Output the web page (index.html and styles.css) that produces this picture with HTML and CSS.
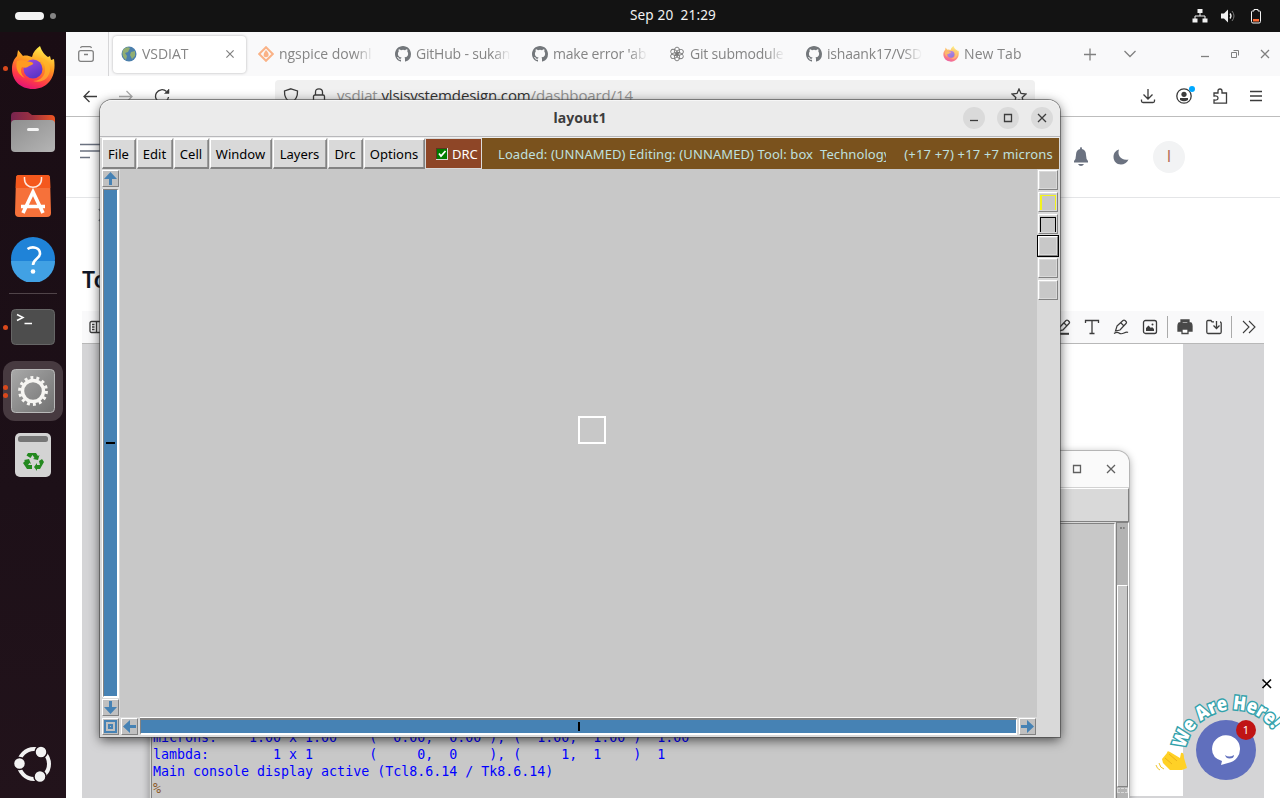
FILE: index.html
```html
<!DOCTYPE html>
<html lang="en">
<head>
<meta charset="utf-8">
<title>Desktop</title>
<link rel="stylesheet" href="styles.css">
</head>
<body>
<svg class="defs" width="0" height="0">
  <defs>
    <linearGradient id="fox" x1="0.7" y1="0" x2="0.3" y2="1"><stop offset="0" stop-color="#fff44f"/><stop offset=".4" stop-color="#ff9a1f"/><stop offset=".75" stop-color="#ff3b47"/><stop offset="1" stop-color="#e0107a"/></linearGradient>
    <linearGradient id="orb" x1="0" y1="0" x2=".5" y2="1"><stop offset="0" stop-color="#a24be0"/><stop offset="1" stop-color="#5a35c8"/></linearGradient>
    <linearGradient id="steel" x1="0" y1="0" x2="1" y2="1"><stop offset="0" stop-color="#a9a9a9"/><stop offset="1" stop-color="#717171"/></linearGradient>
    <linearGradient id="fold" x1="0" y1="0" x2="1" y2="0"><stop offset="0" stop-color="#77244f"/><stop offset=".5" stop-color="#9d3140"/><stop offset="1" stop-color="#ee5622"/></linearGradient>
    <linearGradient id="grey" x1="0" y1="0" x2="1" y2="1"><stop offset="0" stop-color="#8e8e8e"/><stop offset="1" stop-color="#b5b5b5"/></linearGradient>
    <symbol id="firefox" viewBox="0 0 44 44">
      <path d="M1 23C1 17 3 13 6 10L7 4L12 10C15 9 18 10 21 11C22 6 25 3 29 0C31 6 34 9 37 11L39 10L40 14L43 13C46 32 36 43 22 43C9 43 1 34 1 23Z" fill="url(#fox)"/>
      <circle cx="22" cy="23" r="9.500" fill="url(#orb)"/>
      <path d="M6 15C10 13 15 15 20 16C24 17 22 19 18 20C16 22 14 22 11 21C9 24 10 29 14 32C7 29 4 22 6 15Z" fill="#ff9b20"/>
      <path d="M23 13C30 12 35 18 34 25C33 32 27 35 22 35C31 38 39 32 39 23C39 15 32 9 23 13Z" fill="#ffb52a" opacity=".7"/>
    </symbol>
    <symbol id="github" viewBox="0 0 16 16"><path fill="#73777b" fill-rule="evenodd" d="M8 0C3.580 0 0 3.580 0 8c0 3.540 2.290 6.530 5.470 7.590.4.070.55-.17.55-.38 0-.19-.01-.82-.01-1.490-2.010.37-2.530-.49-2.690-.94-.09-.23-.48-.94-.82-1.130-.28-.15-.68-.52-.01-.53.63-.01 1.080.58 1.230.82.72 1.210 1.870.87 2.330.66.07-.52.28-.87.51-1.070-1.780-.2-3.640-.89-3.640-3.950 0-.87.31-1.590.82-2.150-.08-.2-.36-1.020.08-2.120 0 0 .67-.21 2.200.82a7.500 7.500 0 0 1 4 0c1.530-1.040 2.200-.82 2.200-.82.44 1.100.16 1.920.08 2.120.51.56.82 1.270.82 2.150 0 3.070-1.870 3.750-3.650 3.950.29.25.54.73.54 1.480 0 1.070-.01 1.930-.01 2.200 0 .21.15.46.55.38A8 8 0 0 0 16 8c0-4.420-3.580-8-8-8Z"/></symbol>
    <symbol id="min" viewBox="0 0 16 16"><path d="M4 10.500H12"/></symbol>
    <symbol id="max" viewBox="0 0 16 16"><path d="M4.500 4.500H11.500V11.500H4.500Z"/></symbol>
    <symbol id="close" viewBox="0 0 16 16"><path d="M4 4L12 12M12 4L4 12"/></symbol>
    <symbol id="arrow" viewBox="0 0 13 13"><path d="M6.500 0L13 7H8V13H5V7H0Z" fill="#4682b4" stroke="none"/></symbol>
  </defs>
</svg>

<div class="desktop">
  <header class="topbar">
    <div class="spaces"><i class="pill"></i><i class="dot"></i></div>
    <time class="clock">Sep 20&nbsp; 21:29</time>
    <div class="tray">
      <svg width="16" height="16" viewBox="0 0 16 16" fill="#f2f2f2"><path d="M5.500 1h5v4h-5zM.5 10.500h5v4h-5zM10.500 10.500h5v4h-5z"/><path d="M8 5v3M3 11V8h10v3" fill="none" stroke="#f2f2f2"/></svg>
      <svg width="16" height="16" viewBox="0 0 16 16"><path d="M1 5.500H4L8 1.500V14.500L4 10.500H1Z" fill="#f2f2f2"/><path d="M10 5.500Q12 8 10 10.500" fill="none" stroke="#f2f2f2" stroke-width="1.300"/><path d="M12 3Q16 8 12 13" fill="none" stroke="#777"/></svg>
      <svg width="16" height="16" viewBox="0 0 16 16"><path d="M6 1.500H10V3H11.500Q12.500 3 12.500 4V13.500Q12.500 15 11 15H5Q3.500 15 3.500 13.500V4Q3.500 3 4.500 3H6Z" fill="none" stroke="#f2f2f2"/><path d="M5 11h6v2.500H5z" fill="#ff6a33"/></svg>
    </div>
  </header>

  <div class="main">
    <nav class="dock">
      <div class="app run"><svg width="44" height="44"><use href="#firefox"/></svg></div>
      <div class="app"><svg width="46" height="44" viewBox="0 0 46 44"><path d="M1 6Q1 2 5 2H18L22 5H41Q45 5 45 9V20H1Z" fill="url(#fold)"/><rect x="1" y="10" width="44" height="32" rx="4" fill="url(#grey)"/><rect x="17" y="18" width="12" height="3" rx="1.500" fill="#f5f5f5"/></svg></div>
      <div class="app"><svg width="38" height="44" viewBox="0 0 38 44"><path d="M5 1H33Q36 1 36 4L37 39Q37 43 33 43H5Q1 43 1 39L2 4Q2 1 5 1Z" fill="#f6713a"/><path d="M5 1H33Q36 1 36 4L36.300 14H1.700L2 4Q2 1 5 1Z" fill="#f4581d"/><path d="M10.500 3V5C10.500 16 27.500 16 27.500 5V3" fill="none" stroke="#fde9df" stroke-width="1.500"/><path d="M9 39L19 18L29 39M7 32.500H31" fill="none" stroke="#fff" stroke-width="3.600"/></svg></div>
      <div class="app help"><svg width="46" height="46" viewBox="0 0 46 46"><circle cx="23" cy="23" r="22" fill="#1f83d8"/><path d="M1 25H45A22 22 0 0 1 1 25Z" fill="#41a1e4"/><path d="M17.500 13C23 9.500 30 12 30 17.500C30 23 23 22.500 23 29" fill="none" stroke="#fff" stroke-width="2.600"/><circle cx="23" cy="35.500" r="2.300" fill="#fff"/></svg></div>
      <hr class="rule">
      <div class="app run"><svg width="44" height="38" viewBox="0 0 44 38"><rect x=".5" y="1.500" width="43" height="35" rx="4" fill="#4d4d4d" stroke="#666"/><path d="M6 6.500L12 9.500L6 12.500M13.500 15.500H21" fill="none" stroke="#fff" stroke-width="1.500"/></svg></div>
      <div class="app active run two"><svg width="44" height="44" viewBox="0 0 44 44"><rect x=".5" y=".5" width="43" height="43" rx="4" fill="url(#steel)" stroke="#b9b9b9"/><circle cx="22" cy="22" r="10.500" fill="none" stroke="#f6f5f2" stroke-width="3.400"/><circle cx="22" cy="22" r="13.300" fill="none" stroke="#f6f5f2" stroke-width="3.200" stroke-dasharray="2.900 3.069"/></svg></div>
      <div class="app"><svg width="38" height="46" viewBox="0 0 38 46"><rect x="1" y="1" width="36" height="44" rx="5" fill="#d3d3d3"/><rect x="4" y="4" width="30" height="6" rx="2.500" fill="#767676"/><g fill="#24891f"><path d="M14 21h8l2 3 1.500-1-1.500 5-5-1 1.500-1-2-3-2 3-4-2.500z"/><path d="M25 29l3-2 2 3-4 7h-3v2l-3-4 3-4v2h3z"/><path d="M10 28l5-1 2 5-1.500-1-1.500 2h4v4h-5l-4-6 2-2z"/></g></svg></div>
      <div class="ubuntu"><svg width="40" height="40" viewBox="0 0 40 40"><circle cx="21" cy="20" r="15" fill="none" stroke="#f2f2f2" stroke-width="4"/><g fill="#f2f2f2" stroke="#20121a" stroke-width="1.500"><circle cx="6.500" cy="19.500" r="6"/><circle cx="28" cy="8" r="6"/><circle cx="27" cy="32.500" r="6"/></g></svg></div>
    </nav>

    <section class="browser">
      <div class="tabbar">
        <div class="recent"><svg class="ico" width="16" height="16" viewBox="0 0 16 16"><rect x=".7" y="4.700" width="14.600" height="10.600" rx="2"/><path d="M2.500 2Q3 .7 4 .7H12Q13 .7 13.500 2M6 8.500H10"/></svg></div>
        <div class="tab on"><svg width="16" height="16" viewBox="0 0 16 16"><circle cx="8" cy="8" r="7.500" fill="#4b7fac"/><path d="M2 4Q5 0 9 2L7 6L4 7L6 10L5 14Q0 10 2 4M10 6L14 5L14 10L11 13L9 9Z" fill="#91ae72"/></svg><span class="label">VSDIAT</span><svg class="ico x" width="16" height="16"><use href="#close"/></svg></div>
        <div class="tab"><svg width="16" height="16" viewBox="0 0 16 16"><path d="M8 1.200L14.800 8L8 14.800L1.200 8Z" fill="none" stroke="#fab286" stroke-width="2"/><path d="M8 4Q12 8 10 10.500Q8 12 6 10.500Q4.500 8 8 4" fill="#fab286"/></svg><span class="label">ngspice downl</span></div>
        <div class="tab"><svg width="16" height="16"><use href="#github"/></svg><span class="label tight">GitHub - sukan</span></div>
        <div class="tab"><svg width="16" height="16"><use href="#github"/></svg><span class="label tight">make error 'ab</span></div>
        <div class="tab"><svg width="16" height="16" viewBox="0 0 16 16" fill="none" stroke="#777" stroke-width=".9"><g id="knot"><ellipse cx="8" cy="4.800" rx="2.600" ry="3.700"/><ellipse cx="8" cy="11.200" rx="2.600" ry="3.700"/></g><use href="#knot" transform="rotate(60 8 8)"/><use href="#knot" transform="rotate(120 8 8)"/></svg><span class="label tight">Git submodule</span></div>
        <div class="tab"><svg width="16" height="16"><use href="#github"/></svg><span class="label tight">ishaank17/VSD</span></div>
        <div class="tab"><svg width="16" height="16" opacity=".65"><use href="#firefox"/></svg><span class="label plain">New Tab</span></div>
        <div class="tabtools">
          <svg class="ico" width="16" height="16" viewBox="0 0 16 16"><path d="M8 2.500V14.500M2 8.500H14"/></svg>
          <svg class="ico" width="16" height="16" viewBox="0 0 16 16"><path d="M2.500 5L8 10.500L13.500 5"/></svg>
        </div>
        <div class="wintools">
          <svg class="ico" width="16" height="16"><use href="#min"/></svg>
          <svg class="ico" width="16" height="16" viewBox="0 0 16 16"><path d="M4.500 6.500H9.500V11.500H4.500ZM6.500 4.500H11.500V9.500" stroke-width="1"/></svg>
          <svg class="ico" width="16" height="16"><use href="#close"/></svg>
        </div>
      </div>
      <div class="navbar">
        <svg class="ico dark" width="16" height="16" viewBox="0 0 16 16"><path d="M15 8.500H2M7.500 3L2 8.500L7.500 14"/></svg>
        <svg class="ico pale" width="16" height="16" viewBox="0 0 16 16"><path d="M1 8.500H14M8.500 3L14 8.500L8.500 14"/></svg>
        <svg class="ico dark" width="16" height="16" viewBox="0 0 16 16"><path d="M12.500 3.500A6.500 6.500 0 1 0 14.500 9"/><path d="M15 1V5.500H10.500Z" fill="#3c3c3c" stroke-width=".5"/></svg>
        <div class="url">
          <svg class="ico dark" width="16" height="16" viewBox="0 0 16 16"><path d="M8 .8L14.500 3Q15 11 8 15Q1 11 1.500 3Z"/></svg>
          <svg class="ico dark" width="16" height="16" viewBox="0 0 16 16"><path d="M4.500 7V4Q4.500 .8 8 .8Q11.500 .8 11.500 4V7"/><rect x="2.500" y="7" width="11" height="8" rx="1.500"/></svg>
          <span class="address">vsdiat.<b>vlsisystemdesign.com</b>/dashboard/14</span>
          <svg class="ico dark star" width="16" height="16" viewBox="0 0 16 16"><path d="M8 1L10 5.500L15 6L11.200 9.500L12.500 15L8 12L3.500 15L4.800 9.500L1 6L6 5.500Z"/></svg>
        </div>
        <svg class="ico dark" width="16" height="16" viewBox="0 0 16 16"><path d="M8 1V11M3.500 6.500L8 11L12.500 6.500M1.500 11.500V13Q1.500 14.500 3 14.500H13Q14.500 14.500 14.500 13V11.500"/></svg>
        <div class="account"><svg class="ico dark" width="16" height="16" viewBox="0 0 16 16"><circle cx="8" cy="8" r="7.200"/><circle cx="8" cy="6.300" r="2.600" fill="#3c3c3c" stroke="none"/><path d="M4 10H12V12Q8 14.500 4 12Z" fill="#3c3c3c" stroke="none"/></svg><i class="bluedot"></i></div>
        <svg class="ico dark" width="16" height="16" viewBox="0 0 16 16"><path d="M2 5H6V3Q6 1 8 1Q10 1 10 3V5H14.500V15.200H2V12Q6 12.500 6 10Q6 7.500 2 8Z"/></svg>
        <svg class="ico dark" width="16" height="16" viewBox="0 0 16 16"><path d="M2 3.500H14M2 8H14M2 12.500H14"/></svg>
      </div>
      <div class="sitehead">
        <svg width="24" height="16" viewBox="0 0 24 16" stroke="#6b7280" stroke-width="1.600"><path d="M0 1.500H24M0 8H24M0 14.500H10"/></svg>
        <div class="siteicons">
          <svg width="16" height="20" viewBox="0 0 16 20" fill="#6b7280"><path d="M8 0Q9 0 9 2Q13 3 13 8Q13 12 15 14V15.500H1V14Q3 12 3 8Q3 3 7 2Q7 0 8 0ZM5 17H11Q10 19 8 19Q6 19 5 17Z"/></svg>
          <svg width="16" height="16" viewBox="0 0 16 16" fill="#6b7280"><path d="M6 .5C4 6 8 12 15.500 10.500C14 14 11 15.500 8 15.500C3.500 15.500 .5 12 .5 8C.5 4.500 2.500 1.500 6 .5Z"/></svg>
          <div class="avatar">I</div>
        </div>
      </div>
      <div class="page">
        <div class="crumb"><svg width="8" height="14" viewBox="0 0 8 14" fill="none" stroke="#6b7280" stroke-width="1.500"><path d="M1 1L6 7L1 13"/></svg></div>
        <h1 class="heading">To</h1>
        <div class="pdf">
          <div class="pdfbar">
            <svg class="ico dark" width="16" height="16" viewBox="0 0 16 16"><rect x="1" y="2.500" width="14" height="11" rx="1.500"/><path d="M7.500 3V13M3 5.500H5.500M3 8H5.500M3 10.500H5.500"/></svg>
            <div class="pdftools">
              <svg class="ico dark" width="16" height="16" viewBox="0 0 16 16"><path d="M1 14.800H14" stroke-width="2"/><path d="M5 8L11 1.500Q12 .7 13 1.500L14 2.500Q15 3.500 14 4.500L8 11L4 12ZM9 4L12 7"/></svg>
              <svg class="ico dark" width="16" height="16" viewBox="0 0 16 16"><path d="M1.500 4V1.500H14.500V4M8 1.500V14.500M5.500 14.500H10.500"/></svg>
              <svg class="ico dark" width="16" height="16" viewBox="0 0 16 16"><path d="M4 7L10 1.500Q11 .7 12 1.500L13 2.500Q14 3.500 13 4.500L7 11L2.500 12ZM8 4L11 7M1 14.500Q4 12.500 6 14T11 14T15 13.500" stroke-width="1.200"/></svg>
              <svg class="ico dark" width="16" height="16" viewBox="0 0 16 16"><rect x="1.500" y="1.500" width="13" height="13" rx="2"/><path d="M4 12V9L6.500 6.500L9 9L10 8L12 10V12Z" fill="#3c3c3c" stroke="none"/><circle cx="10.500" cy="5.500" r="1" fill="#3c3c3c" stroke="none"/></svg>
              <i class="sep"></i>
              <svg class="ico" width="16" height="16" viewBox="0 0 16 16"><path d="M4 1H12V4H14Q15 5 15 7V12H1V7Q1 5 2 4H4Z" fill="#484848" stroke="#484848"/><path d="M5 2.500H11V4.500H5ZM5 10H11V14.500H5Z" fill="#fff" stroke="#484848"/></svg>
              <svg class="ico dark" width="16" height="16" viewBox="0 0 16 16"><path d="M8 2.800H6L5 1.500H2Q.8 1.500 .8 3V13Q.8 14.500 2 14.500H14Q15.200 14.500 15.200 13V4.500Q15.200 3 14 3M10.500 2V9M7.500 6.500L10.500 9.500L13.500 6.500"/></svg>
              <i class="sep"></i>
              <svg class="ico dark" width="16" height="16" viewBox="0 0 16 16"><path d="M2 2L8 8L2 14M8 2L14 8L8 14" stroke-width="1.100"/></svg>
            </div>
          </div>
          <div class="pdfview"><div class="sheet"></div></div>
        </div>
      </div>
    </section>
  </div>

  <section class="console">
    <div class="ctitle"><svg class="ico soft" width="16" height="16"><use href="#max"/></svg><svg class="ico soft" width="16" height="16"><use href="#close"/></svg></div>
    <div class="cmenu"></div>
    <div class="cbody">
      <pre class="output">microns:    1.00 x 1.00    (  0.00,  0.00 ), (  1.00,  1.00 )  1.00
lambda:        1 x 1       (     0,  0    ), (     1,  1    )  1
Main console display active (Tcl8.6.14 / Tk8.6.14)
<span class="prompt">%</span></pre>
      <div class="cscroll"><i class="cup"></i><i class="thumb"></i><i class="cend"></i></div>
    </div>
  </section>

  <section class="magic">
    <div class="mtitle">
      <span class="mname">layout1</span>
      <div class="mbtns">
        <i><svg class="ico dark" width="16" height="16"><use href="#min"/></svg></i>
        <i><svg class="ico dark" width="16" height="16"><use href="#max"/></svg></i>
        <i><svg class="ico dark" width="16" height="16"><use href="#close"/></svg></i>
      </div>
    </div>
    <div class="mmenu">
      <span class="mb file">File</span><span class="mb edit">Edit</span><span class="mb cell">Cell</span><span class="mb window">Window</span><span class="mb layers">Layers</span><span class="mb drc">Drc</span><span class="mb options">Options</span>
      <span class="check"><svg width="12" height="12" viewBox="0 0 12 12"><path d="M0 0H12V12H0Z" fill="#d9d9d9"/><path d="M0 0H11V11H0Z" fill="#5a3520"/><path d="M1 1H11V11H1Z" fill="#007d00"/><path d="M3 5.500L5 8L9.500 3" fill="none" stroke="#fff" stroke-width="1.800"/></svg>DRC</span>
      <div class="status"><span class="loaded">Loaded: (UNNAMED) Editing: (UNNAMED) Tool: box&nbsp; Technology</span><span class="coords">(+17 +7) +17 +7 microns</span></div>
    </div>
    <div class="mwork">
      <div class="vbar">
        <span class="key"><svg width="13" height="13"><use href="#arrow"/></svg></span>
        <div class="vtrack"><i class="vmark"></i></div>
        <span class="key down"><svg width="13" height="13"><use href="#arrow"/></svg></span>
      </div>
      <div class="canvas"><i class="cursorbox"></i></div>
      <div class="palette"><i class="sw"></i><i class="sw yellow"></i><i class="sw black"></i><i class="sw picked"></i><i class="sw"></i><i class="sw"></i></div>
      <span class="key corner"><svg width="13" height="13" viewBox="0 0 13 13"><path d="M0 0H13V13H0Z" fill="#4682b4"/><path d="M3 3H10V10H3Z" fill="none" stroke="#c0c0c0" stroke-width="2"/><path d="M6 6h1v1H6z" fill="#c0c0c0"/></svg></span>
      <div class="hbar">
        <span class="key left"><svg width="13" height="13"><use href="#arrow"/></svg></span>
        <div class="htrack"><i class="hmark"></i></div>
        <span class="key right"><svg width="13" height="13"><use href="#arrow"/></svg></span>
      </div>
      <div class="filler"></div>
    </div>
  </section>

  <svg class="chat" width="130" height="122" viewBox="1150 676 130 122">
    <path d="M1262.500 679.500L1271 688M1271 679.500L1262.500 688" stroke="#000" stroke-width="1.600"/>
    <circle cx="1226" cy="750" r="30" fill="#606fbd"/>
    <path d="M1212 749A14 14 0 1 1 1228 763L1221 765L1222 761Q1212 758 1212 749Z" fill="#fff"/>
    <path d="M1225 755Q1229 758 1234 755Q1234 758.500 1229.500 758.500Q1226 758.500 1225 755Z" fill="#606fbd"/>
    <path id="curve" d="M1185 749A49 49 0 0 1 1273 730" fill="none"/>
    <text class="hail"><textPath href="#curve" textLength="113" lengthAdjust="spacingAndGlyphs">We Are Here!</textPath></text>
    <circle cx="1246" cy="730" r="10" fill="#c01414"/>
    <text class="badge" x="1246" y="734">1</text>
    <path d="M1162 759L1167 753Q1167 750 1170 752L1180 758L1181 753Q1184 752 1184 758L1187 768L1182 770H1170L1163 763Z" fill="#ffd126"/>
    <path d="M1165 758L1172 764M1169 754L1177 761" stroke="#e5aa16" stroke-width=".8"/>
    <path d="M1159 763Q1160 768 1164 769M1156 765Q1157 769 1160 770" fill="none" stroke="#f0c52b"/>
  </svg>
</div>
</body>
</html>
```
FILE: styles.css
```css
* { box-sizing: border-box; }
body { margin: 0; overflow: hidden; font-family: "Noto Sans", "Open Sans", sans-serif; }
i { font-style: normal; display: block; }
svg { display: block; flex: none; }
.defs { position: absolute; }
.desktop { position: relative; width: 1280px; height: 798px; overflow: hidden; display: flex; flex-direction: column; }
.ico { fill: none; stroke: #808080; stroke-width: 1.3; }
.ico.dark { stroke: #3c3c3c; }
.ico.soft { stroke: #606060; }
.ico.pale { stroke: #aaa; }

/* Top panel */
.topbar { height: 32px; flex: none; background: #131313; color: #f2f2f2; display: grid; grid-template-columns: 615px auto 1fr; align-items: center; padding: 0 16px 0 15px; }
.spaces { display: flex; align-items: center; gap: 6px; }
.pill { width: 29px; height: 8px; border-radius: 4px; background: #f4f4f4; }
.dot { width: 6px; height: 6px; border-radius: 50%; background: #858585; }
.clock { font-size: 13.6px; padding-bottom: 3px; letter-spacing: .12px; }
.tray { display: flex; gap: 12px; justify-content: flex-end; }

/* Dock */
.main { flex: 1; display: flex; min-height: 0; }
.dock { width: 66px; flex: none; background: linear-gradient(#1a0d14, #1d1018 60%, #22131b); display: flex; flex-direction: column; align-items: center; padding-top: 6px; }
.app { width: 60px; height: 60px; margin-bottom: 4px; border-radius: 12px; position: relative; display: flex; align-items: center; justify-content: center; }
.app.help { padding-bottom: 2px; }
.app.active { background: #473a40; }
.run::before { content: ""; position: absolute; left: 0; top: 28px; width: 5px; height: 5px; border-radius: 50%; background: #d9481c; }
.two::before { top: 24px; box-shadow: 0 8px #d9481c; }
.rule { width: 48px; height: 1px; border: 0; background: #504449; margin: -1px 0 3px; }
.ubuntu { margin-top: auto; padding-bottom: 14px; margin-left: -1px; }

/* Browser */
.browser { flex: 1; background: #fff; display: flex; flex-direction: column; min-width: 0; }
.tabbar { height: 44px; flex: none; background: #f9f9fa; display: flex; align-items: center; }
.recent { width: 43px; height: 44px; flex: none; border-right: 1px solid #d6d6d8; padding: 14px 0 0 12px; margin-right: 3px; }
.tab { width: 137px; height: 37px; flex: none; display: flex; align-items: center; padding-left: 9px; gap: 5px; }
.tab.on { background: #fff; border-radius: 4px; box-shadow: 0 0 3px rgba(0,0,0,.28); width: 133px; margin: 0 3px 0 1px; padding-left: 8px; }
.label { width: 95px; padding-bottom: 2px; overflow: hidden; white-space: nowrap; font-family: "Open Sans", sans-serif; font-size: 14px; letter-spacing: -.05px; color: #858585; -webkit-mask-image: linear-gradient(90deg, #000 80%, transparent); mask-image: linear-gradient(90deg, #000 80%, transparent); }
.label.tight { letter-spacing: -.2px; }
.label.plain { letter-spacing: .1px; }
.on .label { width: 75px; }
.on .x { transform: scale(.9); }
.tabtools { display: flex; gap: 24px; margin-left: 11px; }
.wintools { display: flex; gap: 14px; margin-left: 59px; }
.navbar { height: 41px; flex: none; display: flex; align-items: center; gap: 20px; padding: 0 0 1px 16px; border-bottom: 1px solid #bdbdbd; }
.url { width: 760px; height: 32px; margin: 0 85px; flex: none; background: #f0f0f0; border-radius: 4px; display: flex; align-items: center; gap: 12px; padding: 0 8px; }
.address { color: #929292; font-family: "Open Sans", sans-serif; font-size: 15px; letter-spacing: -.12px; margin-left: -2px; padding-bottom: 1px; white-space: nowrap; }
.address b { font-weight: 400; color: #333; }
.star { margin-left: auto; }
.account { position: relative; }
.bluedot { position: absolute; right: -3px; top: -2px; width: 6px; height: 6px; border-radius: 50%; background: #00a8ff; }
.sitehead { height: 81px; flex: none; border-bottom: 1px solid #e4e5e7; display: flex; align-items: center; justify-content: space-between; padding: 0 95px 0 14px; }
.sitehead > svg { margin-bottom: 12px; }
.siteicons { display: flex; align-items: center; gap: 24px; }
.avatar { width: 32px; height: 32px; border-radius: 50%; background: #f2f3f4; color: #b87358; font: 16px "Liberation Sans", sans-serif; display: flex; align-items: center; justify-content: center; }
.page { flex: 1; display: flex; flex-direction: column; padding: 0 16px; min-height: 0; }
.crumb { height: 66px; padding: 10px 0 0 16px; }
.heading { margin: 0; height: 47px; font-size: 23px; line-height: 30px; font-weight: 600; color: #111827; font-family: "Noto Sans", sans-serif; }
.pdf { flex: 1; display: flex; flex-direction: column; min-height: 0; }
.pdfbar { height: 33px; flex: none; background: #f9f9fa; border-bottom: 1px solid #b8b8b8; display: flex; align-items: center; justify-content: space-between; padding: 0 7px; }
.pdftools { display: flex; align-items: center; gap: 13px; }
.pdftools .sep { width: 1px; height: 22px; background: #aaa; margin: 0 -4px; }
.pdfview { flex: 1; background: #d4d4d6; padding: 0 81px 2px; }
.sheet { height: 100%; background: #fff; margin-left: 81px; }

/* Console window */
.console { position: absolute; left: 150px; top: 451px; width: 979px; height: 360px; background: #d9d9d9; border-radius: 12px 12px 0 0; box-shadow: 0 0 0 1px #b5b5b5, 0 2px 9px rgba(0,0,0,.4); display: flex; flex-direction: column; }
.ctitle { height: 37px; flex: none; background: #fafafa; border-radius: 12px 12px 0 0; border-bottom: 1px solid #d2d2d2; display: flex; justify-content: flex-end; align-items: center; gap: 18px; padding-right: 10px; }
.cmenu { height: 34px; flex: none; border: 1px solid; border-color: #fff #828282 #828282 #fff; }
.cbody { flex: 1; display: flex; min-height: 0; }
.output { flex: 1; margin: 1px 1px 0 1px; background: #c8c8c8; border: 1px solid; border-color: #828282 #fff #fff #828282; padding: 205px 0 0 1px; font: 13.3px/17px "DejaVu Sans Mono", monospace; color: #00f; white-space: pre; }
.prompt { color: #8b5a2b; }
.cscroll { width: 13px; background: #b3b3b3; border: 1px solid; border-color: #828282 #fff #fff #828282; display: flex; flex-direction: column; }
.cup { height: 62px; flex: none; }
.cup::before { content: ""; display: block; width: 5px; height: 4px; margin-left: 3px; border-bottom: 2px dotted #828282; }
.thumb { height: 202px; flex: none; background: #c8c8c8; border: 1px solid; border-color: #fff #828282 #828282 #fff; }
.cend { height: 5px; margin-top: 1px; border: 1px dashed #d9d9d9; }

/* Layout window */
.magic { position: absolute; left: 100px; top: 100px; width: 960px; height: 637px; background: #d9d9d9; border-radius: 12px 12px 0 0; box-shadow: 0 0 0 1px rgba(65,65,65,.58), 0 3px 12px rgba(0,0,0,.65); display: flex; flex-direction: column; }
.mtitle { height: 37px; flex: none; background: #ebebeb; border-radius: 12px 12px 0 0; border-bottom: 1px solid #b8b8bb; box-shadow: inset 0 1px #f6f6f6; display: grid; grid-template-columns: 1fr auto 1fr; align-items: center; }
.mname { grid-column: 2; font: 700 14px "Noto Sans", sans-serif; letter-spacing: .1px; padding-bottom: 2px; color: #3d3d3d; }
.mbtns { display: flex; gap: 12px; justify-content: flex-end; padding-right: 7px; }
.mbtns i { width: 22px; height: 22px; border-radius: 50%; background: #dadada; display: flex; align-items: center; justify-content: center; }
.mmenu { height: 32px; flex: none; border-top: 1px solid #eee; display: flex; padding: 0 1px 0 2px; font-size: 13px; color: #000; }
.mb { flex: none; margin-right: 1px; height: 31px; border: 1px solid #fff; border-top-width: 2px; border-right: 1px solid #828282; border-bottom: 2px solid #828282; padding-right: 1px; box-shadow: inset -1px 0 #9c9c9c; display: flex; align-items: center; justify-content: center; }
.file { width: 34px; } .edit { width: 36px; } .cell { width: 35px; } .window { width: 62px; } .layers { width: 54px; } .drc { width: 35px; } .options { width: 61px; }
.check { width: 56px; flex: none; height: 29px; margin-top: 1px; background: #8e4627; color: #fff; display: flex; align-items: center; gap: 4px; padding-left: 10px; border-right: 1px solid #ddd; }
.status { flex: 1; background: #7a521d; color: #bfe0df; display: flex; align-items: center; justify-content: space-between; padding: 0 6px 0 16px; white-space: nowrap; }
.loaded { width: 388px; overflow: hidden; letter-spacing: .09px; }
.coords { letter-spacing: .18px; }
.mwork { flex: 1; display: grid; grid-template-columns: 20px 917px 1fr; grid-template-rows: 548px 1fr; min-height: 0; }
.vbar { display: flex; flex-direction: column; padding: 1px 1px 1px 2px; gap: 2px; }
.key { width: 17px; height: 17px; flex: none; background: #c0c0c0; border: 1px solid; border-color: #fff #828282 #828282 #fff; display: flex; align-items: center; justify-content: center; }
.down svg { transform: rotate(180deg); }
.left svg { transform: rotate(-90deg); }
.right svg { transform: rotate(90deg); }
.vtrack { flex: 1; width: 16px; margin-left: 1px; background: #4682b4; border: solid; border-width: 1px 2px 1px 1px; border-color: #828282 #fff #fff #828282; box-shadow: -1px 0 #fff, 0 1px #fff; display: flex; align-items: center; justify-content: center; }
.vmark { width: 9px; height: 2px; background: #000; }
.canvas { background: #c8c8c8; padding: 247px 0 0 458px; }
.cursorbox { width: 28px; height: 28px; border: 2px solid #fff; }
.palette { display: flex; flex-direction: column; align-items: center; gap: 2px; padding: 1px 1px 0 0; }
.sw { width: 20px; height: 20px; flex: none; border: 1px solid; border-color: #fff #828282 #828282 #fff; background: #c8c8c8; box-shadow: inset 0 0 0 1px #d9d9d9; padding: 1px; }
.yellow::before, .black::before { content: ""; display: block; width: 16px; height: 15px; box-sizing: border-box; border: 1px solid #f3f31c; border-bottom: 0; margin-top: 1px; }
.yellow::before { border-left-width: 2px; }
.black::before { border-color: #000; }
.picked { outline: 1px solid #000; }
.corner { margin: 1px 1px 0 2px; }
.hbar { display: flex; padding: 1px 1px 0 1px; gap: 2px; }
.htrack { flex: 1; height: 17px; background: #4682b4; border: solid; border-width: 2px 1px; border-color: #828282 #fff #fff #828282; box-shadow: 0 -1px #fff; display: flex; align-items: center; justify-content: center; }
.hmark { width: 2px; height: 9px; background: #000; }

/* Chat bubble */
.chat { position: absolute; left: 1150px; top: 676px; }
.hail { font: 800 19px "Open Sans", sans-serif; fill: #fff; stroke: #32a1ab; stroke-width: 3px; paint-order: stroke; }
.badge { font: 11px "Noto Sans", sans-serif; fill: #fff; text-anchor: middle; }
```
